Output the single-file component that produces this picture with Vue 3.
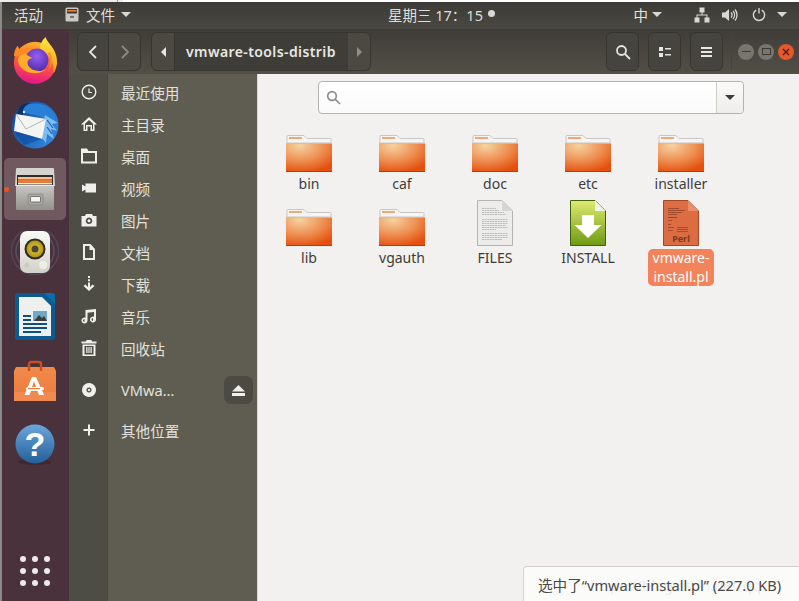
<script setup>
const dock = ['firefox', 'thunderbird', 'files', 'rhythmbox', 'writer', 'store', 'help']

const places = [
  { icon: 'recent', name: '最近使用' },
  { icon: 'home', name: '主目录' },
  { icon: 'folder', name: '桌面' },
  { icon: 'video', name: '视频' },
  { icon: 'camera', name: '图片' },
  { icon: 'doc', name: '文档' },
  { icon: 'down', name: '下载' },
  { icon: 'music', name: '音乐' },
  { icon: 'trash', name: '回收站' },
  { icon: 'disc', name: 'VMwa…', eject: true },
  { icon: 'plus', name: '其他位置' }
]

const files = [
  { name: 'bin', type: 'dir' },
  { name: 'caf', type: 'dir' },
  { name: 'doc', type: 'dir' },
  { name: 'etc', type: 'dir' },
  { name: 'installer', type: 'dir' },
  { name: 'lib', type: 'dir' },
  { name: 'vgauth', type: 'dir' },
  { name: 'FILES', type: 'text' },
  { name: 'INSTALL', type: 'install' },
  { name: 'vmware-install.pl', type: 'perl', selected: true }
]
</script>

<template>
  <div class="screen">
    <div class="top-strip"></div>
    <header class="topbar">
      <div class="top-left">
        <span class="activities">活动</span>
        <svg class="app-ico" width="14" height="15" viewBox="0 0 14 15">
          <rect x="0.500" y="0.500" width="13" height="14" rx="1.500" fill="#c9c7c2" />
          <rect x="2" y="2" width="10" height="4.500" fill="#3a3836" />
          <rect x="2.500" y="3" width="9" height="1.600" fill="#e8803c" />
          <rect x="5" y="9" width="4" height="2" fill="#77746f" />
        </svg>
        <span class="app-name">文件</span>
        <i class="caret"></i>
      </div>
      <div class="clock">星期三 17：15<i class="dot"></i></div>
      <div class="tray">
        <span class="ime">中</span>
        <i class="caret ime-caret"></i>
        <svg class="net" width="16" height="16" viewBox="0 0 16 16" fill="#d8d7d3">
          <rect x="5.500" y="0.500" width="5" height="5" />
          <rect x="0.500" y="10.500" width="5" height="5" />
          <rect x="10.500" y="10.500" width="5" height="5" />
          <path d="M7.500 5h1v2.500H13.500V11h-1V8.500h-9V11h-1V7.500h5z" />
        </svg>
        <svg class="vol" width="16" height="14" viewBox="0 0 16 14" fill="none" stroke="#d8d7d3">
          <path d="M0 4.500h3L7 1v12L3 9.500H0z" fill="#d8d7d3" stroke="none" />
          <path d="M9 4.500a3.500 3.500 0 0 1 0 5M11 3a6 6 0 0 1 0 8M13 1.500a8.500 8.500 0 0 1 0 11" stroke-width="1.300" />
        </svg>
        <svg class="pow" width="14" height="15" viewBox="0 0 15 15" fill="none" stroke="#d8d7d3" stroke-width="1.500">
          <path d="M4.500 2.700a6 6 0 1 0 6 0M7.500 0.500v6" />
        </svg>
        <i class="caret"></i>
      </div>
    </header>

    <div class="body-row">
      <aside class="dock">
        <div class="dock-list">
          <div v-for="d in dock" :key="d" class="dock-item" :class="{ active: d === 'files', raised: d === 'firefox' }">
            <i v-if="d === 'files'" class="run-dot"></i>

            <svg v-if="d === 'firefox'" width="46" height="47" viewBox="0 0 48 49">
              <defs>
                <linearGradient id="ffa" x1="0.6" y1="0" x2="0.4" y2="1">
                  <stop offset="0" stop-color="#ffb62a" />
                  <stop offset="0.5" stop-color="#ff5a3a" />
                  <stop offset="1" stop-color="#e3128c" />
                </linearGradient>
                <linearGradient id="ffc" x1="0.5" y1="0" x2="0.5" y2="1">
                  <stop offset="0" stop-color="#ffe73e" />
                  <stop offset="1" stop-color="#ff9a1e" />
                </linearGradient>
                <radialGradient id="ffb" cx="0.5" cy="0.35" r="0.7">
                  <stop offset="0" stop-color="#9a5cf0" />
                  <stop offset="1" stop-color="#4a2ca6" />
                </radialGradient>
              </defs>
              <circle cx="24" cy="27" r="22" fill="url(#ffa)" />
              <path d="M30 14C28 9 31 4 35 0 37 7 48 13 47 28 46 33 45 36 43 38 45 28 40 18 30 14z" fill="url(#ffc)" />
              <path d="M2 20C2 15 4 11 6 9 7 12 8 13 9 14 14 11 20 10 24 12 19 13 15 16 13 20z" fill="#ff8a24" />
              <circle cx="26" cy="24" r="12" fill="url(#ffb)" />
              <path d="M6 24C7 36 24 43 37 33 30 37 21 36 17 30 15 26 17 23 21 22 18 20 15 19 14 17 10 18 7 20 6 24z" fill="#ffad2a" />
              <path d="M40 16C43 22 43 30 38 35 41 28 40 22 37 17z" fill="#ff8a24" opacity="0.800" />
            </svg>

            <svg v-else-if="d === 'thunderbird'" width="48" height="48" viewBox="0 0 48 48">
              <defs>
                <linearGradient id="tba" x1="0" y1="0" x2="1" y2="0.6">
                  <stop offset="0" stop-color="#0e3f8e" />
                  <stop offset="1" stop-color="#2f86dc" />
                </linearGradient>
              </defs>
              <circle cx="24" cy="24" r="23.500" fill="url(#tba)" />
              <path d="M7 10C14 1 30 0 38 7 46 15 48 25 45 34 44 26 39 21 34 18 26 13 16 13 7 10z" fill="#2a7fd6" />
              <path d="M34 14L47 22 41 23 46 30 40 28 43 38 36 33 35 42 30 36z" fill="#7cbcf0" />
              <path d="M36 19L42 27M36 26L41 33" stroke="#1c62b8" stroke-width="1.200" />
              <path d="M8 7C11 3 15 2 19 2 13 5 11 9 12 14L6 13z" fill="#0c2f66" />
              <path d="M5 13L35 18 31 38 3 30z" fill="#f4f4f3" />
              <path d="M5 13L15 28 35 18" fill="none" stroke="#a9abb0" stroke-width="0.900" />
              <path d="M3 30L13 44 31 38" fill="#0f4a9e" opacity="0.600" />
              <circle cx="13" cy="11" r="1.200" fill="#d9e8f6" />
            </svg>

            <svg v-else-if="d === 'files'" width="42" height="43" viewBox="0 0 42 43">
              <defs>
                <linearGradient id="fca" x1="0" y1="0" x2="0" y2="1">
                  <stop offset="0" stop-color="#c8c7c3" />
                  <stop offset="1" stop-color="#93928d" />
                </linearGradient>
              </defs>
              <path d="M2 1a1 1 0 0 1 1-1H39a1 1 0 0 1 1 1L41 18H1z" fill="#d4d3cf" />
              <rect x="3" y="7" width="36" height="11" fill="#2f2d2b" />
              <rect x="4" y="9" width="34" height="2.500" fill="#f6c48a" />
              <rect x="4" y="11.500" width="34" height="3.500" fill="#e67a3a" />
              <rect x="4" y="15" width="34" height="1.500" fill="#f0ede6" />
              <rect x="2" y="17" width="38" height="25" rx="1" fill="url(#fca)" />
              <rect x="2" y="17" width="38" height="1" fill="#e9e8e4" />
              <rect x="14" y="26" width="15" height="11" rx="1.500" fill="#a8a7a2" stroke="#7d7c77" stroke-width="0.600" />
              <rect x="16.500" y="28.500" width="10" height="5.500" rx="0.800" fill="#f3f3f1" stroke="#4e4d49" stroke-width="0.700" />
            </svg>

            <svg v-else-if="d === 'rhythmbox'" width="50" height="44" viewBox="0 0 50 44">
              <defs>
                <linearGradient id="rba" x1="0" y1="0" x2="0" y2="1">
                  <stop offset="0" stop-color="#fbfbf6" />
                  <stop offset="1" stop-color="#d2d1c8" />
                </linearGradient>
                <radialGradient id="rbb" cx="0.5" cy="0.5" r="0.55">
                  <stop offset="0" stop-color="#f0d338" />
                  <stop offset="1" stop-color="#a88c10" />
                </radialGradient>
              </defs>
              <circle cx="25" cy="20" r="23.500" fill="none" stroke="#59597a" stroke-width="1.500" opacity="0.500" />
              <circle cx="25" cy="20" r="19" fill="none" stroke="#6a7090" stroke-width="1.500" opacity="0.450" />
              <rect x="10" y="0" width="30" height="42" rx="7" fill="url(#rba)" />
              <circle cx="25" cy="18" r="10.500" fill="#2e2c27" />
              <circle cx="25" cy="18" r="8.500" fill="url(#rbb)" />
              <circle cx="25" cy="18" r="3.500" fill="#4b463a" />
              <circle cx="33" cy="34" r="4" fill="#f2f2ec" opacity="0.800" />
              <circle cx="17" cy="34" r="2.500" fill="#c2c1b8" opacity="0.600" />
            </svg>

            <svg v-else-if="d === 'writer'" width="40" height="48" viewBox="0 0 40 48">
              <path d="M3 0h26l11 11v33a3 3 0 0 1-3 3H3a3 3 0 0 1-3-3V3a3 3 0 0 1 3-3z" fill="#0d5a8e" />
              <path d="M29 0h8a3 3 0 0 1 3 3v8z" fill="#0d6cab" />
              <path d="M4 4h23l9 9v30H4z" fill="#eef0f0" />
              <rect x="18" y="18" width="14" height="10" fill="#6fa8cc" />
              <path d="M19 28l5-6 3 3 2-2 3 5z" fill="#3a3f3a" />
              <path d="M8 22h8v2H8zM8 26h8v2H8zM8 30h24v2H8zM8 34h24v2H8zM8 38h18v2H8z" fill="#0d4f80" />
            </svg>

            <svg v-else-if="d === 'store'" width="42" height="42" viewBox="0 0 42 42">
              <defs>
                <linearGradient id="sta" x1="0" y1="0" x2="0" y2="1">
                  <stop offset="0" stop-color="#f08a4a" />
                  <stop offset="1" stop-color="#ee7a3c" />
                </linearGradient>
              </defs>
              <path d="M2 7H40L42 11V41H0V11z" fill="url(#sta)" />
              <rect x="0" y="32" width="42" height="9" fill="#f08a50" />
              <path d="M15 11V4a2 2 0 0 1 2-2h8a2 2 0 0 1 2 2v7" fill="none" stroke="#c9501e" stroke-width="2.400" />
              <path d="M18 17h4l8 18h-5l-1.500-4h-6.500L15.500 35h-5zM20 21l-2 6h4z" fill="#fff" fill-rule="evenodd" />
              <rect x="12" y="27" width="18" height="3.200" rx="1.500" fill="#fff" />
              <rect x="14" y="28" width="12" height="1.200" fill="#ee7a3c" />
            </svg>

            <svg v-else width="40" height="42" viewBox="0 0 40 42">
              <defs>
                <linearGradient id="hpa" x1="0" y1="0" x2="0" y2="1">
                  <stop offset="0" stop-color="#6ba6dc" />
                  <stop offset="1" stop-color="#235f98" />
                </linearGradient>
              </defs>
              <ellipse cx="20" cy="38" rx="17" ry="3" fill="#2a1a22" opacity="0.350" />
              <circle cx="20" cy="20" r="19.500" fill="url(#hpa)" />
              <text x="20" y="32" text-anchor="middle" class="help-mark">?</text>
            </svg>
          </div>
        </div>
        <div class="apps-grid">
          <i v-for="n in 9" :key="n"></i>
        </div>
      </aside>

      <div class="window">
        <div class="headerbar">
          <div class="btn-group nav-group">
            <button class="hbtn nav">
              <svg width="10" height="14" viewBox="0 0 10 14" fill="none" stroke="#e6e5e1" stroke-width="1.800"><path d="M8 1L2 7l6 6" /></svg>
            </button>
            <button class="hbtn nav">
              <svg width="10" height="14" viewBox="0 0 10 14" fill="none" stroke="#8b8a84" stroke-width="1.800"><path d="M2 1l6 6-6 6" /></svg>
            </button>
          </div>
          <div class="pathbar">
            <span class="path-arrow"><i class="tri-left"></i></span>
            <span class="crumb">vmware-tools-distrib</span>
            <span class="path-arrow right"><i class="tri-right"></i></span>
          </div>
          <div class="head-right">
            <button class="hbtn square">
              <svg width="16" height="16" viewBox="0 0 16 16" fill="none" stroke="#e6e5e1" stroke-width="1.800"><circle cx="6.500" cy="6.500" r="4.500" /><path d="M10 10l5 5" /></svg>
            </button>
            <button class="hbtn square">
              <svg width="12" height="10" viewBox="0 0 12 10" fill="#e6e5e1"><rect width="4" height="4" /><rect y="6" width="4" height="4" /><rect x="6" y="1" width="6" height="1.500" /><rect x="6" y="7" width="6" height="1.500" /></svg>
            </button>
            <button class="hbtn square">
              <svg width="11" height="10" viewBox="0 0 11 10" fill="#e6e5e1"><rect width="11" height="2" /><rect y="4" width="11" height="2" /><rect y="8" width="11" height="2" /></svg>
            </button>
            <i class="head-sep"></i>
            <div class="win-btns">
              <span class="wb"><i class="wb-min"></i></span>
              <span class="wb"><i class="wb-max"></i></span>
              <span class="wb close">
                <svg width="8" height="8" viewBox="0 0 8 8" stroke="#4a1c0c" stroke-width="1.300"><path d="M1 1l6 6M7 1L1 7" /></svg>
              </span>
            </div>
          </div>
        </div>

        <div class="main-row">
          <nav class="sidebar">
            <div v-for="p in places" :key="p.name" class="place" :class="{ mount: p.eject, other: p.icon === 'plus' }">
              <span class="place-ico">
                <svg width="16" height="16" viewBox="0 0 16 16" fill="#f0efeb">
                  <template v-if="p.icon === 'recent'">
                    <circle cx="8" cy="8" r="6.800" fill="none" stroke="#f0efeb" stroke-width="1.400" />
                    <path d="M8 4.500V8.500H11" fill="none" stroke="#f0efeb" stroke-width="1.200" />
                  </template>
                  <path v-else-if="p.icon === 'home'" d="M8 1L0 8.500H2.500V15H6.500V10.500H9.500V15H13.500V8.500H16zM4 7.800L8 4 12 7.800V13.500H11V9H5V13.500H4z" fill-rule="evenodd" />
                  <path v-else-if="p.icon === 'folder'" d="M0 0.500H6L7.500 3H16V15.500H0zM2 5V13.500H14V5z" fill-rule="evenodd" />
                  <path v-else-if="p.icon === 'video'" d="M1 4.500L4.500 6.500V3.500H15V12.500H4.500V9.500L1 11.500z" />
                  <path v-else-if="p.icon === 'camera'" d="M5 2H11L12 4H15.500V14.500H0.500V4H4zM8 5.500a3.300 3.300 0 1 0 0.010 0zM8 7.200a1.600 1.600 0 1 1-0.010 0z" fill-rule="evenodd" />
                  <path v-else-if="p.icon === 'doc'" d="M2 0H9.500L14 5V16H2zM4 2V14H12V6H8.500V2z" fill-rule="evenodd" />
                  <path v-else-if="p.icon === 'down'" d="M7 0H9V2H7zM7 3.300H9V5.300H7zM7 6.500H9V11L11.500 8.500 13.500 10 8 15 2.500 10 4.500 8.500 7 11z" />
                  <path v-else-if="p.icon === 'music'" d="M4.500 2L15 1V11.500A3 3 0 1 1 13 8.700V4L6.500 4.700V12.500A3 3 0 1 1 4.500 9.700zM3.500 11a1.500 1.500 0 1 0 0.010 3zM12 10a1.500 1.500 0 1 0 0.010 3z" fill-rule="evenodd" />
                  <path v-else-if="p.icon === 'trash'" d="M5.500 0H10.500L11 1.500H15.500V3.500H0.500V1.500H5zM1.500 4.500H14.500V16H1.500zM3.500 6V14.500H12.500V6zM5.200 7H6.500V13H5.200zM7.400 7H8.600V13H7.400zM9.500 7H10.800V13H9.500z" fill-rule="evenodd" />
                  <path v-else-if="p.icon === 'disc'" d="M8 1a7 7 0 1 0 0.010 0zM8 5.500a2.500 2.500 0 1 1-0.010 0zM8 6.800a1.200 1.200 0 1 0 0.010 0z" fill-rule="evenodd" />
                  <path v-else d="M7 2.500H9V7H13.500V9H9V13.500H7V9H2.500V7H7z" />
                </svg>
              </span>
              <span class="place-name">{{ p.name }}</span>
              <button v-if="p.eject" class="eject">
                <svg width="13" height="11" viewBox="0 0 13 11" fill="#f0efeb"><path d="M6.500 0L13 6.500H0z" /><rect y="8" width="13" height="3" /></svg>
              </button>
            </div>
          </nav>

          <main class="content">
            <div class="searchbox">
              <svg class="search-ico" width="15" height="15" viewBox="0 0 15 15" fill="none" stroke="#8f8d89" stroke-width="1.700"><circle cx="6" cy="6" r="4.300" /><path d="M9.300 9.300L14 14" /></svg>
              <span class="search-drop"><i></i></span>
            </div>

            <div class="grid">
              <div v-for="f in files" :key="f.name" class="file" :class="{ selected: f.selected }">
                <svg v-if="f.type === 'dir'" class="file-ico" width="48" height="46" viewBox="0 -9 48 46">
                  <path d="M2 8V1.500a1 1 0 0 1 1-1h16l3 3h23a1 1 0 0 1 1 1V8z" fill="#f6f5f3" stroke="#c9c7c4" />
                  <rect x="4" y="2" width="13" height="2" fill="#f0a878" />
                  <rect x="1" y="8" width="46" height="28.500" fill="url(#folderFill)" />
                  <rect x="1" y="8" width="46" height="0.800" fill="#f3b48a" />
                  <rect x="1" y="36" width="46" height="1" fill="#a8401a" />
                </svg>

                <svg v-else-if="f.type === 'text'" class="file-ico" width="36" height="46" viewBox="0 0 36 46">
                  <path d="M0.500 0.500H25L35.500 11V45.500H0.500z" fill="#ececea" stroke="#b4b3b0" />
                  <path d="M25 0.500L35.500 11H25z" fill="#d6d6d4" />
                  <path d="M5 8.500h14M5 10.500h17M5 12.500h22M5 14.500h24M5 19.500h26M5 21.500h26M5 23.500h26M5 25.500h24M5 27.500h26M5 29.500h14M5 33.500h26M5 35.500h26M5 37.500h26M5 39.500h20" stroke="#8d8c8a" stroke-width="0.500" stroke-dasharray="2 0.600" />
                </svg>

                <svg v-else-if="f.type === 'install'" class="file-ico" width="36" height="46" viewBox="0 0 36 46">
                  <defs>
                    <linearGradient id="insa" x1="0" y1="0" x2="0" y2="1">
                      <stop offset="0" stop-color="#dfea72" />
                      <stop offset="1" stop-color="#6f9a12" />
                    </linearGradient>
                  </defs>
                  <path d="M0.500 0.500H25L35.500 11V45.500H0.500z" fill="url(#insa)" stroke="#3f6208" />
                  <path d="M25 0.500L35.500 11H25z" fill="#f2f4e4" />
                  <path d="M12 15H24V25H31.500L18 38 4.500 25H12z" fill="#fff" />
                </svg>

                <svg v-else class="file-ico" width="36" height="46" viewBox="0 0 36 46">
                  <path d="M0.500 0.500H25L35.500 11V45.500H0.500z" fill="#dc6c42" stroke="#a34824" />
                  <path d="M25 0.500L35.500 11H25z" fill="#e98f68" />
                  <path d="M5 8.500h11M5 10.500h17M5 12.500h14M5 14.500h9M5 20.500h4M5 24.500h3M5 27.500h6M14 27.500h11M5 30.500h5M14 29.500h11M14 31.500h11" stroke="#7a3a22" stroke-width="0.600" />
                  <path d="M5 17.500h9" stroke="#b5203a" stroke-width="0.800" />
                  <text x="18" y="42" text-anchor="middle" class="perl">Perl</text>
                </svg>

                <span class="file-name">{{ f.name }}</span>
              </div>
            </div>

            <div class="status">
              选中了“vmware-install.pl” (227.0 KB)
              <span class="watermark">https://blog.csdn.net/qq</span>
            </div>
          </main>
        </div>
      </div>
    </div>

    <svg width="0" height="0" class="defs">
      <defs>
        <radialGradient id="folderFill" cx="0.3" cy="0.1" r="0.95">
          <stop offset="0" stop-color="#f5d3a0" />
          <stop offset="0.55" stop-color="#ee8f52" />
          <stop offset="1" stop-color="#e5500f" />
        </radialGradient>
      </defs>
    </svg>
  </div>
</template>

<style scoped>
.screen {
  width: 799px;
  height: 601px;
  display: flex;
  flex-direction: column;
  overflow: hidden;
  background: #ffffff;
  font-family: "Noto Sans", "Noto Sans CJK SC", sans-serif;
}
.defs { position: absolute; }
.top-strip {
  height: 2px;
  flex: none;
  background: linear-gradient(to right, #efeeec 117px, #9a9a98 117px, #9a9a98 118px, #efeeec 118px, #efeeec 123px, #fff 123px);
}

.topbar {
  height: 27px;
  flex: none;
  position: relative;
  box-sizing: border-box;
  display: flex;
  align-items: center;
  justify-content: space-between;
  padding-bottom: 2px;
  border-left: 2px solid #8a8a88;
  background: linear-gradient(#3c3b37, #4a4842);
  color: #dfdeda;
  font-size: 14.500px;
}
.top-left { display: flex; align-items: center; padding-left: 12px; }
.activities { width: 51px; }
.app-ico { margin-right: 7px; }
.app-name { margin-right: 6px; }
.caret {
  display: block;
  width: 0;
  height: 0;
  border-left: 5px solid transparent;
  border-right: 5px solid transparent;
  border-top: 5px solid #d8d7d3;
}
.clock {
  position: absolute;
  left: 386px;
  top: 3px;
  display: flex;
  align-items: center;
  line-height: 20px;
  white-space: nowrap;
}
.dot {
  width: 7px;
  height: 7px;
  margin: -3px 0 0 5px;
  border-radius: 50%;
  background: #d8d7d3;
}
.tray { display: flex; align-items: center; padding-right: 12px; }
.ime { margin-right: 4px; color: #e4e3df; }
.ime-caret { margin-right: 32px; }
.net { margin-right: 12px; }
.vol { margin-right: 14px; }
.pow { margin-right: 11px; }

.body-row { flex: 1; display: flex; min-height: 0; border-left: 2px solid #8a8a88; }

.dock {
  width: 67px;
  flex: none;
  display: flex;
  flex-direction: column;
  justify-content: space-between;
  background: #49323b;
}
.dock-list { display: flex; flex-direction: column; padding-top: 1px; }
.dock-item {
  position: relative;
  height: 62px;
  margin: 0 3px 2px 2px;
  display: flex;
  align-items: center;
  justify-content: center;
  border-radius: 5px;
}
.dock-item.active { background: #705a60; }
.dock-item.raised svg { margin-bottom: 1px; }
.run-dot {
  position: absolute;
  left: -0.500px;
  top: 29px;
  width: 5px;
  height: 5px;
  border-radius: 50%;
  background: #e9541f;
}
.help-mark { font: bold 34px "Liberation Sans", sans-serif; fill: #fff; }
.apps-grid {
  display: grid;
  grid-template-columns: repeat(3, 6px);
  gap: 6px;
  justify-content: center;
  padding: 0 1px 15px 0;
}
.apps-grid i { width: 6px; height: 6px; border-radius: 50%; background: #eceaea; }

.window { flex: 1; display: flex; flex-direction: column; min-width: 0; }

.headerbar {
  height: 45px;
  flex: none;
  box-sizing: border-box;
  display: flex;
  align-items: center;
  padding: 3px 0 3px 8px;
  background: linear-gradient(#3f3d38, #524f47);
}
.btn-group { display: flex; }
.hbtn {
  padding: 0;
  display: flex;
  align-items: center;
  justify-content: center;
  background: #46443e;
  border: 1px solid #36352f;
  height: 39px;
}
.nav { width: 32px; }
.nav:first-child { border-radius: 6px 0 0 6px; }
.nav:last-child { border-radius: 0 6px 6px 0; border-left: 0; background: #4b4942; }
.pathbar { display: flex; height: 39px; margin-left: 10px; color: #e8e7e3; }
.path-arrow {
  width: 22px;
  display: flex;
  align-items: center;
  justify-content: center;
  border: 1px solid #36352f;
  border-radius: 6px 0 0 6px;
  background: #4b4942;
}
.path-arrow.right { border-radius: 0 6px 6px 0; border-left: 0; background: #4b4942; }
.tri-left, .tri-right { width: 0; height: 0; border-top: 5px solid transparent; border-bottom: 5px solid transparent; }
.tri-left { border-right: 5px solid #e6e5e1; }
.tri-right { border-left: 5px solid #8f8d86; }
.crumb {
  width: 173px;
  box-sizing: border-box;
  padding-left: 11px;
  display: flex;
  align-items: center;
  font-size: 14px;
  font-weight: 600;
  letter-spacing: 0.400px;
  white-space: nowrap;
  background: #3f3d38;
  border-top: 1px solid #36352f;
  border-bottom: 1px solid #36352f;
}
.head-right { margin-left: auto; display: flex; align-items: center; padding-right: 5px; }
.square { width: 33px; border-radius: 6px; margin-left: 9px; }
.head-sep { width: 1px; height: 36px; margin: 0 6px 0 8px; background: #45433d; }
.win-btns { display: flex; gap: 4px; }
.wb {
  width: 16px;
  height: 16px;
  display: flex;
  align-items: center;
  justify-content: center;
  border-radius: 50%;
  background: #77756e;
}
.wb-min { width: 9px; height: 1px; background: #3d3b37; }
.wb-max { width: 7px; height: 5px; border: 1px solid #3d3b37; }
.close { background: #e6572a; }

.main-row { flex: 1; display: flex; min-height: 0; }

.sidebar {
  width: 189px;
  flex: none;
  box-sizing: border-box;
  padding-top: 2px;
  border-right: 1px solid #d9d7d3;
  background: linear-gradient(to right, #4e4d45 0, #4e4d45 38px, #46453e 38px, #46453e 39px, #5f5d52 39px);
}
.place {
  position: relative;
  height: 32px;
  display: flex;
  align-items: center;
  color: #e2e1dc;
  font-size: 14.600px;
}
.place-ico { width: 39px; flex: none; display: flex; justify-content: center; }
.place-name { margin-left: 13px; }
.mount { height: 36px; margin-top: 8px; }
.other { margin-top: 6px; }
.eject {
  position: absolute;
  right: 4px;
  top: 4px;
  width: 29px;
  height: 28px;
  padding: 0;
  display: flex;
  align-items: center;
  justify-content: center;
  border: 0;
  border-radius: 7px;
  background: #4b4a43;
}

.content { position: relative; flex: 1; min-width: 0; background: #f2f1f0; }

.searchbox {
  position: relative;
  width: 426px;
  height: 33px;
  box-sizing: border-box;
  margin: 7px 0 0 60px;
  background: linear-gradient(#fff, #fafafa);
  border: 1px solid #b4b2ae;
  border-radius: 4px;
}
.search-ico { position: absolute; left: 7px; top: 8px; }
.search-drop {
  position: absolute;
  right: 0;
  top: 0;
  bottom: 0;
  width: 26px;
  display: flex;
  align-items: center;
  justify-content: center;
  border-left: 1px solid #cfcdc9;
  border-radius: 0 4px 4px 0;
  background: linear-gradient(#fafaf9, #eeedeb);
}
.search-drop i {
  width: 0;
  height: 0;
  border-left: 5px solid transparent;
  border-right: 5px solid transparent;
  border-top: 5px solid #3d3c38;
}

.grid {
  display: grid;
  grid-template-columns: repeat(5, 93px);
  grid-auto-rows: 74px;
  margin: 12px 0 0 4.500px;
}
.file { display: flex; flex-direction: column; align-items: center; height: 74px; }
.file-ico { height: 46px; flex: none; }
.file-name {
  margin-top: 3px;
  padding: 0 3px;
  color: #3d3c3a;
  font-size: 14px;
  line-height: 18px;
  text-align: center;
  white-space: nowrap;
}
.selected .file-name {
  width: 62px;
  padding: 0 2px;
  line-height: 18.500px;
  white-space: normal;
  color: #fff;
  background: #f2835a;
  border-radius: 5px;
}
.perl { font: bold 9px "Noto Sans", sans-serif; fill: #7a3a22; }

.status {
  position: absolute;
  right: 0;
  bottom: 0;
  width: 276px;
  height: 35px;
  box-sizing: border-box;
  padding: 8px 0 0 14px;
  color: #4a4946;
  font-size: 14.600px;
  line-height: 20px;
  white-space: nowrap;
  background: #fbfbfa;
  border: 1px solid #d3d2cf;
  border-width: 1px 0 0 1px;
  border-radius: 4px 0 0 0;
}
.watermark {
  position: absolute;
  left: 66px;
  top: 8px;
  color: rgba(80, 80, 80, 0.100);
  font-size: 15px;
}
</style>
